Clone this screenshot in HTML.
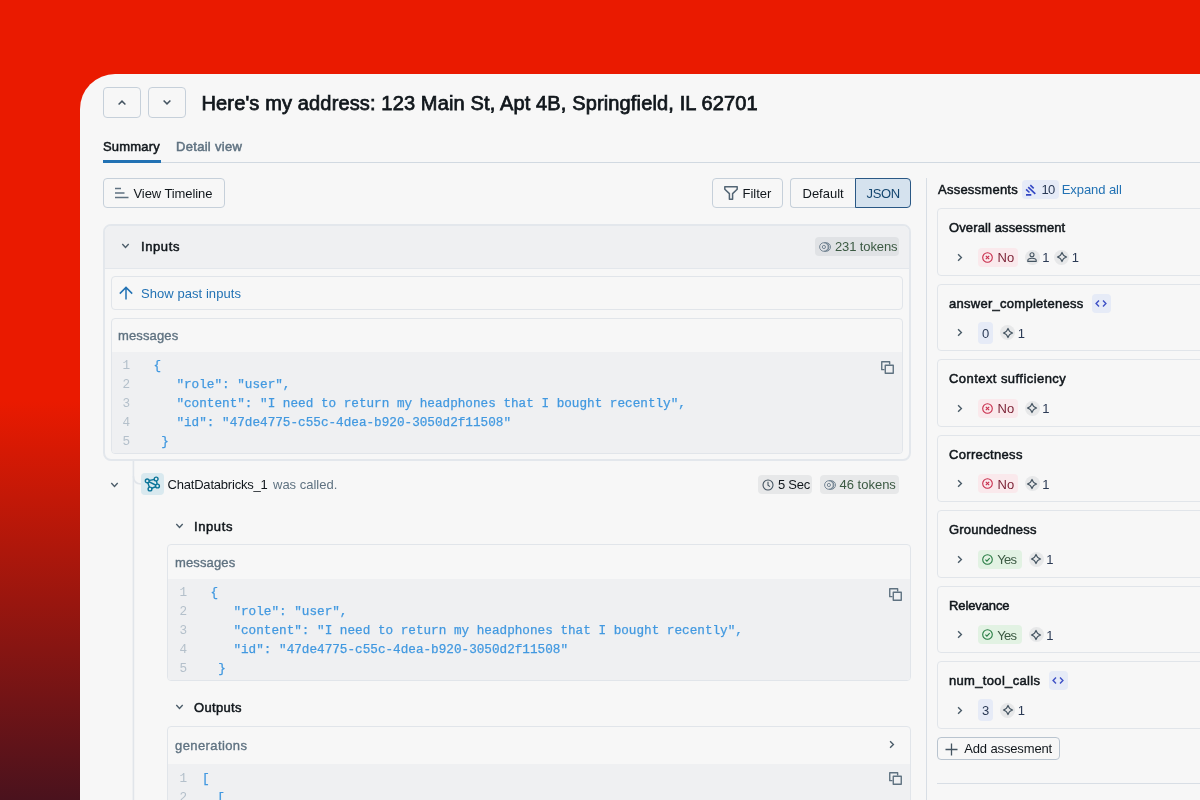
<!DOCTYPE html>
<html lang="en">
<head>
<meta charset="utf-8">
<title>Trace summary</title>
<style>
*{box-sizing:border-box;margin:0;padding:0}
html,body{width:1200px;height:800px;overflow:hidden}
body{position:relative;font-family:"Liberation Sans",Arial,sans-serif;font-size:13px;line-height:20px;color:#11171c;
  background:linear-gradient(180deg,#ea1a00 0%,#ea1a00 50%,#4a121d 100%);}
.panel{position:absolute;left:80px;top:74px;width:1130px;height:740px;background:#f7f7f7;border-top-left-radius:35px;overflow:hidden}
.o{position:absolute;left:-80px;top:-74px;width:1200px;height:800px;will-change:transform}
.abs{position:absolute}
.t{position:absolute;white-space:nowrap;line-height:20px;margin-top:1px}
.b{font-weight:400;-webkit-text-stroke:0.5px currentColor}
aside .t{margin-top:0}
.sec{color:#5f7281}
.m{-webkit-text-stroke:0.35px currentColor}
.link{color:#2272b4}
svg{position:absolute;overflow:visible}
.btn{position:absolute;border:1px solid #c6d0da;border-radius:4px;background:#f7f7f7}
.card{position:absolute;border:1px solid #e1e5ea;border-radius:4px}
.code{position:absolute;background:#eff0f2}
.mono{font-family:"Liberation Mono","DejaVu Sans Mono",monospace;font-size:12.68px;line-height:19px;color:#4299e0;white-space:pre;position:absolute;-webkit-text-stroke:0.25px currentColor}
.ln{font-family:"Liberation Mono","DejaVu Sans Mono",monospace;font-size:12.68px;line-height:19px;color:#b4c0cb;white-space:pre;position:absolute}
.tag{position:absolute;border-radius:4px;background:rgba(68,83,95,0.085)}
</style>
</head>
<body>
<div class="panel"><div class="o">

<!-- header -->
<header>
  <div class="btn" style="left:103px;top:87px;width:38px;height:31px"></div>
  <div class="btn" style="left:148px;top:87px;width:38px;height:31px"></div>
  <svg style="left:118px;top:99.7px" width="8" height="5" viewBox="0 0 8 5" fill="none" stroke="#445461" stroke-width="1.5"><path d="M0.6 4.5L4 1.1L7.4 4.5"/></svg>
  <svg style="left:163px;top:100.3px" width="8" height="5" viewBox="0 0 8 5" fill="none" stroke="#445461" stroke-width="1.5"><path d="M0.6 0.5L4 3.9L7.4 0.5"/></svg>
  <h1 class="t b" id="title" style="left:201.5px;top:88.75px;font-size:20px;line-height:26px;-webkit-text-stroke:0.75px currentColor;letter-spacing:0.14px">Here's my address: 123 Main St, Apt 4B, Springfield, IL 62701</h1>
</header>

<!-- tabs -->
<nav>
  <div class="abs" style="left:103px;top:162px;width:1100px;height:1px;background:#d1d9e1"></div>
  <div class="abs" style="left:103px;top:160px;width:58px;height:3px;background:#2272b4"></div>
  <span class="t b" id="tab1" style="left:103px;top:136px;letter-spacing:0.17px">Summary</span>
  <span class="t b sec" id="tab2" style="left:176px;top:136px;letter-spacing:0.30px">Detail view</span>
</nav>

<!-- toolbar -->
<section>
  <div class="btn" style="left:103px;top:178px;width:122px;height:30px"></div>
  <svg style="left:115px;top:187px" width="14" height="12" viewBox="0 0 14 12" fill="none" stroke="#5f7281" stroke-width="1.5"><path d="M0 1.5h6M0 6h9.5M0 10.5h13.5"/></svg>
  <span class="t" id="vt" style="left:133.5px;top:183px;letter-spacing:-0.08px">View Timeline</span>

  <div class="btn" style="left:712px;top:178px;width:71px;height:30px"></div>
  <svg style="left:724px;top:186px" width="14" height="14" viewBox="0 0 14 14" fill="none" stroke="#536574" stroke-width="1.5" stroke-linejoin="round"><path d="M0.8 0.8h12.4v2.4L8.6 7.6v5.6H5.4V7.6L0.8 3.2z"/></svg>
  <span class="t" id="filt" style="left:742.5px;top:183px">Filter</span>

  <div class="btn" style="left:790px;top:178px;width:66px;height:30px;border-radius:4px 0 0 4px;border-right:0"></div>
  <div class="btn" style="left:855px;top:178px;width:56px;height:30px;border-radius:0 4px 4px 0;background:#d5e2ee;border-color:#2a5885"></div>
  <span class="t" id="def" style="left:802.5px;top:183px">Default</span>
  <span class="t" id="json" style="left:866.5px;top:183px;color:#14466f;letter-spacing:-0.33px">JSON</span>
</section>

<!-- inputs card -->
<section>
  <div class="abs" style="left:103px;top:224px;width:808px;height:237px;border:2px solid #e3e7ec;border-radius:8px;background:#f7f7f7"></div>
  <div class="abs" style="left:105px;top:226px;width:804px;height:43px;background:#eff0f2;border-radius:6px 6px 0 0;border-bottom:1px solid #e3e7ec"></div>
  <svg style="left:121px;top:243px" width="9" height="6" viewBox="0 0 9 6" fill="none" stroke="#4b5c69" stroke-width="1.4"><path d="M1.3 1.1L4.5 4.4L7.7 1.1"/></svg>
  <span class="t b" id="in1" style="left:141px;top:236px;letter-spacing:0.60px">Inputs</span>
  <div class="tag" style="left:815px;top:237px;width:84px;height:19px"></div>
  <svg style="left:818.5px;top:240.5px" width="12" height="12" viewBox="0 0 12 12" fill="none" stroke="#6b7d8c" stroke-width="0.9"><circle cx="4.9" cy="6" r="4.3"/><circle cx="4.9" cy="6" r="1.6"/><path d="M6.6 1.8a4.3 4.3 0 0 1 0 8.4M5.2 1.7h2a4.3 4.3 0 0 1 0 8.6h-2"/></svg>
  <span class="t" id="tok1" style="left:835px;top:236px;color:#3c5a43;letter-spacing:-0.11px">231 tokens</span>

  <div class="card" style="left:111px;top:276px;width:792px;height:34px"></div>
  <svg style="left:118.7px;top:286px" width="14" height="14" viewBox="0 0 14 14" fill="none" stroke="#2272b4" stroke-width="1.5"><path d="M7 13.6V1.6M0.8 7.6L7 1.4L13.2 7.6"/></svg>
  <span class="t link" id="spi" style="left:141px;top:283px;letter-spacing:0.06px">Show past inputs</span>

  <div class="card" style="left:111px;top:318px;width:792px;height:136px;overflow:hidden"><div class="code" style="left:0;top:33px;width:792px;height:102px"></div></div>
  <span class="t sec m" id="msg1" style="left:118px;top:325px;letter-spacing:0.14px">messages</span>
  <pre class="ln" style="left:122.5px;top:356px">1
2
3
4
5</pre>
  <pre class="mono" id="code1" style="left:153.6px;top:356px">{
   "role": "user",
   "content": "I need to return my headphones that I bought recently",
   "id": "47de4775-c55c-4dea-b920-3050d2f11508"
 }</pre>
  <svg style="left:881px;top:360.8px" width="13" height="13" viewBox="0 0 14 14" fill="none" stroke="#5f7281" stroke-width="1.5" stroke-linejoin="round"><path d="M3.8 9.3H0.8V0.8H9.3V3.8"/><rect x="4.6" y="4.6" width="8.6" height="8.6"/></svg>
</section>

<!-- span row -->
<section>
  <svg style="left:109.8px;top:481.5px" width="9" height="6" viewBox="0 0 9 6" fill="none" stroke="#4b5c69" stroke-width="1.4"><path d="M1.3 1.1L4.5 4.4L7.7 1.1"/></svg>
  <svg style="left:132px;top:461px" width="12" height="340" viewBox="0 0 12 340" fill="none" stroke="#e1e5ea" stroke-width="1.6"><path d="M1.4 0V340"/><path d="M1.4 15c0 5.5 2.6 8 7.8 8"/></svg>
  <div class="abs" style="left:141px;top:473px;width:22.5px;height:22px;border-radius:4px;background:#d9e9ef"></div>
  <svg style="left:144px;top:476px" width="16" height="16" viewBox="0 0 16 16" fill="none" stroke="#0b7599" stroke-width="1.4"><path d="M3.25 4.9L12.15 3L13.5 10L6 13ZM3.25 4.9L13.5 10"/><g fill="#d9e9ef"><circle cx="3.25" cy="4.9" r="1.9"/><circle cx="12.15" cy="3" r="1.9"/><circle cx="13.5" cy="10" r="1.9"/><circle cx="6" cy="13" r="1.9"/></g></svg>
  <span class="t" id="cdb" style="left:167.5px;top:474px;letter-spacing:-0.20px">ChatDatabricks_1</span>
  <span class="t sec" id="wc" style="left:273px;top:474px">was called.</span>

  <div class="tag" style="left:758px;top:475px;width:54px;height:19px"></div>
  <svg style="left:761.5px;top:478.5px" width="12" height="12" viewBox="0 0 12 12" fill="none" stroke="#445461" stroke-width="1.1"><circle cx="6" cy="6" r="5"/><path d="M6 2.8V6.2L8 7.6"/></svg>
  <span class="t" id="sec5" style="left:778px;top:474px;letter-spacing:-0.25px">5 Sec</span>
  <div class="tag" style="left:820px;top:475px;width:79px;height:19px"></div>
  <svg style="left:823.5px;top:478.5px" width="12" height="12" viewBox="0 0 12 12" fill="none" stroke="#6b7d8c" stroke-width="0.9"><circle cx="4.9" cy="6" r="4.3"/><circle cx="4.9" cy="6" r="1.6"/><path d="M6.6 1.8a4.3 4.3 0 0 1 0 8.4M5.2 1.7h2a4.3 4.3 0 0 1 0 8.6h-2"/></svg>
  <span class="t" id="tok2" style="left:839.5px;top:474px;color:#3c5a43">46 tokens</span>

  <svg style="left:175px;top:523px" width="9" height="6" viewBox="0 0 9 6" fill="none" stroke="#4b5c69" stroke-width="1.4"><path d="M1.3 1.1L4.5 4.4L7.7 1.1"/></svg>
  <span class="t b" id="in2" style="left:194px;top:516px;letter-spacing:0.60px">Inputs</span>

  <div class="card" style="left:167px;top:544px;width:744px;height:137px;overflow:hidden"><div class="code" style="left:0;top:34px;width:744px;height:102px"></div></div>
  <span class="t sec m" id="msg2" style="left:175px;top:552px;letter-spacing:0.14px">messages</span>
  <pre class="ln" style="left:179.5px;top:582.5px">1
2
3
4
5</pre>
  <pre class="mono" id="code2" style="left:210.6px;top:582.5px">{
   "role": "user",
   "content": "I need to return my headphones that I bought recently",
   "id": "47de4775-c55c-4dea-b920-3050d2f11508"
 }</pre>
  <svg style="left:889px;top:587.8px" width="13" height="13" viewBox="0 0 14 14" fill="none" stroke="#5f7281" stroke-width="1.5" stroke-linejoin="round"><path d="M3.8 9.3H0.8V0.8H9.3V3.8"/><rect x="4.6" y="4.6" width="8.6" height="8.6"/></svg>

  <svg style="left:175px;top:704px" width="9" height="6" viewBox="0 0 9 6" fill="none" stroke="#4b5c69" stroke-width="1.4"><path d="M1.3 1.1L4.5 4.4L7.7 1.1"/></svg>
  <span class="t b" id="out" style="left:194px;top:697px;letter-spacing:0.34px">Outputs</span>

  <div class="card" style="left:167px;top:726px;width:744px;height:120px;overflow:hidden"><div class="code" style="left:0;top:37px;width:744px;height:102px"></div></div>
  <span class="t sec m" id="gen" style="left:175px;top:735px;letter-spacing:0.40px">generations</span>
  <svg style="left:889px;top:740px" width="6" height="9" viewBox="0 0 6 9" fill="none" stroke="#4b5c69" stroke-width="1.4"><path d="M1.1 1.2L4.4 4.5L1.1 7.8"/></svg>
  <pre class="ln" style="left:179.5px;top:768.5px">1
2</pre>
  <pre class="mono" id="code3" style="left:202px;top:768.5px">[
  [</pre>
  <svg style="left:889px;top:771.8px" width="13" height="13" viewBox="0 0 14 14" fill="none" stroke="#5f7281" stroke-width="1.5" stroke-linejoin="round"><path d="M3.8 9.3H0.8V0.8H9.3V3.8"/><rect x="4.6" y="4.6" width="8.6" height="8.6"/></svg>
</section>

<!-- assessments -->
<aside>
  <div class="abs" style="left:926px;top:178px;width:1px;height:640px;background:#d8dee5"></div>
  <span class="t b" id="ass" style="left:938px;top:180px;letter-spacing:0.24px">Assessments</span>
  <div class="tag" style="left:1021.5px;top:180px;width:37px;height:19px;background:#e6ebf7"></div>
  <svg style="left:1025px;top:183.5px" width="12" height="12" viewBox="0 0 12 12" fill="none" stroke="#3347c4" stroke-width="1.6"><path d="M5.3 1.1L8.7 4.3M3.2 3.1L10.3 9.8M1.1 5.3L4.5 8.5M1 10.9H6.3"/></svg>
  <span class="t" id="n10" style="left:1041.5px;top:180px;color:#2b3a55;letter-spacing:-0.7px">10</span>
  <span class="t link" id="exp" style="left:1061.7px;top:180px;letter-spacing:-0.07px">Expand all</span>
  <article>
    <div class="card" style="left:937px;top:208.3px;width:300px;height:67.5px"></div>
    <span class="t b" id="c0" style="left:949px;top:218.0px;letter-spacing:0.12px">Overall assessment</span>
    <svg style="left:957px;top:252.7px" width="6" height="9" viewBox="0 0 6 9" fill="none" stroke="#4b5c69" stroke-width="1.4"><path d="M1.1 1.2L4.4 4.5L1.1 7.8"/></svg>
    <div class="tag" style="left:978px;top:247.7px;width:39.5px;height:19px;background:#fae9ec"></div>
    <svg style="left:982.0px;top:251.7px" width="11" height="11" viewBox="0 0 11 11" fill="none" stroke="#c82d4c" stroke-width="1.1"><circle cx="5.5" cy="5.5" r="4.8"/><path d="M3.8 3.8L7.2 7.2M7.2 3.8L3.8 7.2"/></svg>
    <span class="t" id="r0" style="left:997.5px;top:248.0px;color:#7a1f33">No</span>
    <div class="abs" style="left:1024.5px;top:249.7px;width:15px;height:15px;border-radius:50%;background:rgba(68,83,95,0.085)"></div>
    <svg style="left:1027.0px;top:252.2px" width="10" height="10" viewBox="0 0 10 10" fill="none" stroke="#445461" stroke-width="1.1"><circle cx="5" cy="2.7" r="2"/><path d="M0.8 9.4V8.6C0.8 7 2.6 6.3 5 6.3S9.2 7 9.2 8.6V9.4Z" stroke-linejoin="round"/></svg>
    <span class="t" id="s0_0" style="left:1042.3px;top:248.0px;color:#2b3a55">1</span>
    <div class="abs" style="left:1054.0px;top:249.7px;width:15px;height:15px;border-radius:50%;background:rgba(68,83,95,0.085)"></div>
    <svg style="left:1056.5px;top:252.2px" width="10" height="10" viewBox="0 0 10 10" fill="none" stroke="#445461" stroke-width="1.1" stroke-linejoin="round"><path d="M5 0.4Q5.95 4.05 9.6 5Q5.95 5.95 5 9.6Q4.05 5.95 0.4 5Q4.05 4.05 5 0.4Z"/></svg>
    <span class="t" id="s0_1" style="left:1071.8px;top:248.0px;color:#2b3a55">1</span>
  </article>
  <article>
    <div class="card" style="left:937px;top:283.8px;width:300px;height:67.5px"></div>
    <span class="t b" id="c1" style="left:949px;top:293.5px;letter-spacing:0.27px">answer_completeness</span>
    <div class="tag" style="left:1091.6px;top:293.8px;width:19px;height:19px;background:#e6ebf7"></div>
    <svg style="left:1095.1px;top:299.8px" width="12" height="7" viewBox="0 0 12 7" fill="none" stroke="#3f51c6" stroke-width="1.4"><path d="M4 0.6L1.1 3.5L4 6.4M8 0.6L10.9 3.5L8 6.4"/></svg>
    <svg style="left:957px;top:328.2px" width="6" height="9" viewBox="0 0 6 9" fill="none" stroke="#4b5c69" stroke-width="1.4"><path d="M1.1 1.2L4.4 4.5L1.1 7.8"/></svg>
    <div class="tag" style="left:978px;top:321.7px;width:15px;height:22px;background:#e6ebf7"></div>
    <span class="t" id="r1" style="left:982px;top:323.5px;color:#2b3a55">0</span>
    <div class="abs" style="left:1000.0px;top:325.2px;width:15px;height:15px;border-radius:50%;background:rgba(68,83,95,0.085)"></div>
    <svg style="left:1002.5px;top:327.7px" width="10" height="10" viewBox="0 0 10 10" fill="none" stroke="#445461" stroke-width="1.1" stroke-linejoin="round"><path d="M5 0.4Q5.95 4.05 9.6 5Q5.95 5.95 5 9.6Q4.05 5.95 0.4 5Q4.05 4.05 5 0.4Z"/></svg>
    <span class="t" id="s1_0" style="left:1017.8px;top:323.5px;color:#2b3a55">1</span>
  </article>
  <article>
    <div class="card" style="left:937px;top:359.3px;width:300px;height:67.5px"></div>
    <span class="t b" id="c2" style="left:949px;top:369.0px;letter-spacing:0.44px">Context sufficiency</span>
    <svg style="left:957px;top:403.7px" width="6" height="9" viewBox="0 0 6 9" fill="none" stroke="#4b5c69" stroke-width="1.4"><path d="M1.1 1.2L4.4 4.5L1.1 7.8"/></svg>
    <div class="tag" style="left:978px;top:398.7px;width:39.5px;height:19px;background:#fae9ec"></div>
    <svg style="left:982.0px;top:402.7px" width="11" height="11" viewBox="0 0 11 11" fill="none" stroke="#c82d4c" stroke-width="1.1"><circle cx="5.5" cy="5.5" r="4.8"/><path d="M3.8 3.8L7.2 7.2M7.2 3.8L3.8 7.2"/></svg>
    <span class="t" id="r2" style="left:997.5px;top:399.0px;color:#7a1f33">No</span>
    <div class="abs" style="left:1024.5px;top:400.7px;width:15px;height:15px;border-radius:50%;background:rgba(68,83,95,0.085)"></div>
    <svg style="left:1027.0px;top:403.2px" width="10" height="10" viewBox="0 0 10 10" fill="none" stroke="#445461" stroke-width="1.1" stroke-linejoin="round"><path d="M5 0.4Q5.95 4.05 9.6 5Q5.95 5.95 5 9.6Q4.05 5.95 0.4 5Q4.05 4.05 5 0.4Z"/></svg>
    <span class="t" id="s2_0" style="left:1042.3px;top:399.0px;color:#2b3a55">1</span>
  </article>
  <article>
    <div class="card" style="left:937px;top:434.8px;width:300px;height:67.5px"></div>
    <span class="t b" id="c3" style="left:949px;top:444.5px;letter-spacing:0.33px">Correctness</span>
    <svg style="left:957px;top:479.2px" width="6" height="9" viewBox="0 0 6 9" fill="none" stroke="#4b5c69" stroke-width="1.4"><path d="M1.1 1.2L4.4 4.5L1.1 7.8"/></svg>
    <div class="tag" style="left:978px;top:474.2px;width:39.5px;height:19px;background:#fae9ec"></div>
    <svg style="left:982.0px;top:478.2px" width="11" height="11" viewBox="0 0 11 11" fill="none" stroke="#c82d4c" stroke-width="1.1"><circle cx="5.5" cy="5.5" r="4.8"/><path d="M3.8 3.8L7.2 7.2M7.2 3.8L3.8 7.2"/></svg>
    <span class="t" id="r3" style="left:997.5px;top:474.5px;color:#7a1f33">No</span>
    <div class="abs" style="left:1024.5px;top:476.2px;width:15px;height:15px;border-radius:50%;background:rgba(68,83,95,0.085)"></div>
    <svg style="left:1027.0px;top:478.7px" width="10" height="10" viewBox="0 0 10 10" fill="none" stroke="#445461" stroke-width="1.1" stroke-linejoin="round"><path d="M5 0.4Q5.95 4.05 9.6 5Q5.95 5.95 5 9.6Q4.05 5.95 0.4 5Q4.05 4.05 5 0.4Z"/></svg>
    <span class="t" id="s3_0" style="left:1042.3px;top:474.5px;color:#2b3a55">1</span>
  </article>
  <article>
    <div class="card" style="left:937px;top:510.3px;width:300px;height:67.5px"></div>
    <span class="t b" id="c4" style="left:949px;top:520.0px;letter-spacing:0.20px">Groundedness</span>
    <svg style="left:957px;top:554.7px" width="6" height="9" viewBox="0 0 6 9" fill="none" stroke="#4b5c69" stroke-width="1.4"><path d="M1.1 1.2L4.4 4.5L1.1 7.8"/></svg>
    <div class="tag" style="left:978px;top:549.7px;width:43.5px;height:19px;background:#e2f2e3"></div>
    <svg style="left:982.0px;top:553.7px" width="11" height="11" viewBox="0 0 11 11" fill="none" stroke="#277c43" stroke-width="1.1"><circle cx="5.5" cy="5.5" r="4.8"/><path d="M3.4 5.7L4.9 7.2L7.7 4.1"/></svg>
    <span class="t" id="r4" style="left:997.3px;top:550.0px;color:#3c5a43;letter-spacing:-0.8px">Yes</span>
    <div class="abs" style="left:1028.5px;top:551.7px;width:15px;height:15px;border-radius:50%;background:rgba(68,83,95,0.085)"></div>
    <svg style="left:1031.0px;top:554.2px" width="10" height="10" viewBox="0 0 10 10" fill="none" stroke="#445461" stroke-width="1.1" stroke-linejoin="round"><path d="M5 0.4Q5.95 4.05 9.6 5Q5.95 5.95 5 9.6Q4.05 5.95 0.4 5Q4.05 4.05 5 0.4Z"/></svg>
    <span class="t" id="s4_0" style="left:1046.3px;top:550.0px;color:#2b3a55">1</span>
  </article>
  <article>
    <div class="card" style="left:937px;top:585.8px;width:300px;height:67.5px"></div>
    <span class="t b" id="c5" style="left:949px;top:595.5px;letter-spacing:-0.11px">Relevance</span>
    <svg style="left:957px;top:630.2px" width="6" height="9" viewBox="0 0 6 9" fill="none" stroke="#4b5c69" stroke-width="1.4"><path d="M1.1 1.2L4.4 4.5L1.1 7.8"/></svg>
    <div class="tag" style="left:978px;top:625.2px;width:43.5px;height:19px;background:#e2f2e3"></div>
    <svg style="left:982.0px;top:629.2px" width="11" height="11" viewBox="0 0 11 11" fill="none" stroke="#277c43" stroke-width="1.1"><circle cx="5.5" cy="5.5" r="4.8"/><path d="M3.4 5.7L4.9 7.2L7.7 4.1"/></svg>
    <span class="t" id="r5" style="left:997.3px;top:625.5px;color:#3c5a43;letter-spacing:-0.8px">Yes</span>
    <div class="abs" style="left:1028.5px;top:627.2px;width:15px;height:15px;border-radius:50%;background:rgba(68,83,95,0.085)"></div>
    <svg style="left:1031.0px;top:629.7px" width="10" height="10" viewBox="0 0 10 10" fill="none" stroke="#445461" stroke-width="1.1" stroke-linejoin="round"><path d="M5 0.4Q5.95 4.05 9.6 5Q5.95 5.95 5 9.6Q4.05 5.95 0.4 5Q4.05 4.05 5 0.4Z"/></svg>
    <span class="t" id="s5_0" style="left:1046.3px;top:625.5px;color:#2b3a55">1</span>
  </article>
  <article>
    <div class="card" style="left:937px;top:661.3px;width:300px;height:67.5px"></div>
    <span class="t b" id="c6" style="left:949px;top:671.0px;letter-spacing:0.33px">num_tool_calls</span>
    <div class="tag" style="left:1048.8px;top:671.3px;width:19px;height:19px;background:#e6ebf7"></div>
    <svg style="left:1052.3px;top:677.3px" width="12" height="7" viewBox="0 0 12 7" fill="none" stroke="#3f51c6" stroke-width="1.4"><path d="M4 0.6L1.1 3.5L4 6.4M8 0.6L10.9 3.5L8 6.4"/></svg>
    <svg style="left:957px;top:705.7px" width="6" height="9" viewBox="0 0 6 9" fill="none" stroke="#4b5c69" stroke-width="1.4"><path d="M1.1 1.2L4.4 4.5L1.1 7.8"/></svg>
    <div class="tag" style="left:978px;top:699.2px;width:15px;height:22px;background:#e6ebf7"></div>
    <span class="t" id="r6" style="left:982px;top:701.0px;color:#2b3a55">3</span>
    <div class="abs" style="left:1000.0px;top:702.7px;width:15px;height:15px;border-radius:50%;background:rgba(68,83,95,0.085)"></div>
    <svg style="left:1002.5px;top:705.2px" width="10" height="10" viewBox="0 0 10 10" fill="none" stroke="#445461" stroke-width="1.1" stroke-linejoin="round"><path d="M5 0.4Q5.95 4.05 9.6 5Q5.95 5.95 5 9.6Q4.05 5.95 0.4 5Q4.05 4.05 5 0.4Z"/></svg>
    <span class="t" id="s6_0" style="left:1017.8px;top:701.0px;color:#2b3a55">1</span>
  </article>
  <div class="btn" style="left:937px;top:737px;width:123px;height:23px;border-color:#b9c4cf"></div>
  <svg style="left:945px;top:742.5px" width="13" height="13" viewBox="0 0 13 13" fill="none" stroke="#445461" stroke-width="1.3"><path d="M6.5 0.5V12.5M0.5 6.5H12.5"/></svg>
  <span class="t" id="add" style="left:964.2px;top:738.5px;letter-spacing:-0.13px">Add assesment</span>
  <div class="abs" style="left:937px;top:783px;width:270px;height:1px;background:#d8dee5"></div>
</aside>

</div></div>
</body>
</html>
